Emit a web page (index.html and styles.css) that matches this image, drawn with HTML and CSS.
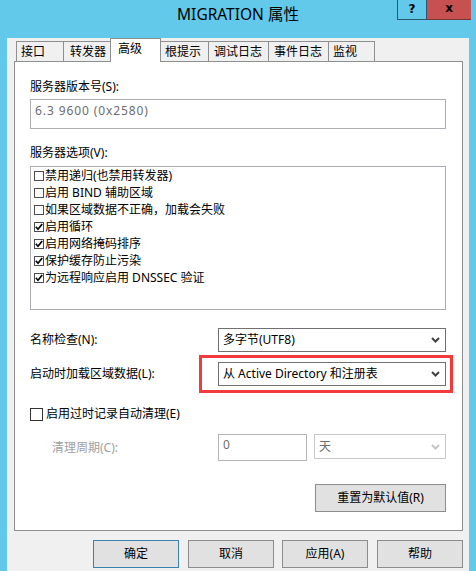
FILE: index.html
```
<!DOCTYPE html>
<html lang="zh-CN">
<head>
<meta charset="utf-8">
<title>MIGRATION 属性</title>
<link rel="stylesheet" href="styles.css">
</head>
<body>
<div class="window">
  <div class="titlebar">
    <div class="title">MIGRATION 属性</div>
    <div class="caption-btns">
      <div class="cap-help">?</div>
      <div class="cap-close">x</div>
    </div>
  </div>
  <div class="client">
    <div class="tabs">
      <div class="tab t1">接口</div>
      <div class="tab t2">转发器</div>
      <div class="tab active">高级</div>
      <div class="tab t4">根提示</div>
      <div class="tab t5">调试日志</div>
      <div class="tab t6">事件日志</div>
      <div class="tab t7">监视</div>
    </div>
    <div class="panel">
      <div class="label">服务器版本号(S):</div>
      <div class="textbox version">6.3 9600 (0x2580)</div>
      <div class="label label-options">服务器选项(V):</div>
      <div class="listbox">
        <div class="item"><span class="lcb"></span>禁用递归(也禁用转发器)</div>
        <div class="item"><span class="lcb"></span>启用 BIND 辅助区域</div>
        <div class="item"><span class="lcb"></span>如果区域数据不正确，加载会失败</div>
        <div class="item"><span class="lcb"><svg width="8" height="8" viewBox="0 0 8 8"><polyline points="0.8,3.8 3,6.2 7.2,1" fill="none" stroke="#000" stroke-width="1.7"/></svg></span>启用循环</div>
        <div class="item"><span class="lcb"><svg width="8" height="8" viewBox="0 0 8 8"><polyline points="0.8,3.8 3,6.2 7.2,1" fill="none" stroke="#000" stroke-width="1.7"/></svg></span>启用网络掩码排序</div>
        <div class="item"><span class="lcb"><svg width="8" height="8" viewBox="0 0 8 8"><polyline points="0.8,3.8 3,6.2 7.2,1" fill="none" stroke="#000" stroke-width="1.7"/></svg></span>保护缓存防止污染</div>
        <div class="item"><span class="lcb"><svg width="8" height="8" viewBox="0 0 8 8"><polyline points="0.8,3.8 3,6.2 7.2,1" fill="none" stroke="#000" stroke-width="1.7"/></svg></span>为远程响应启用 DNSSEC 验证</div>
      </div>
      <div class="row row-name">
        <span class="row-label">名称检查(N):</span>
        <div class="combo">
          <span class="combo-text">多字节(UTF8)</span>
          <svg class="chev" width="9" height="6" viewBox="0 0 9 6"><polyline points="1,1 4.5,4.5 8,1" fill="none" stroke="#404040" stroke-width="2"/></svg>
        </div>
      </div>
      <div class="row row-load">
        <span class="row-label">启动时加载区域数据(L):</span>
        <div class="combo highlighted">
          <span class="combo-text">从 Active Directory 和注册表</span>
          <svg class="chev" width="9" height="6" viewBox="0 0 9 6"><polyline points="1,1 4.5,4.5 8,1" fill="none" stroke="#404040" stroke-width="2"/></svg>
          <div class="redbox"></div>
        </div>
      </div>
      <div class="check-row"><span class="cbox"></span>启用过时记录自动清理(E)</div>
      <div class="row row-clean">
        <span class="row-label disabled-label">清理周期(C):</span>
        <div class="textbox period">0</div>
        <div class="combo unit">
          <span class="combo-text grey">天</span>
          <svg class="chev" width="9" height="6" viewBox="0 0 9 6"><polyline points="1,1 4.5,4.5 8,1" fill="none" stroke="#c4c4c4" stroke-width="2"/></svg>
        </div>
      </div>
      <div class="reset-row"><div class="btn reset">重置为默认值(R)</div></div>
    </div>
    <div class="buttons">
      <div class="btn dlg default">确定</div>
      <div class="btn dlg">取消</div>
      <div class="btn dlg">应用(A)</div>
      <div class="btn dlg">帮助</div>
    </div>
  </div>
</div>
</body>
</html>
```
FILE: styles.css
```
* { box-sizing: border-box; }
html, body { margin: 0; padding: 0; }
body {
  width: 476px;
  height: 571px;
  overflow: hidden;
  background: #62c9ea;
  font-family: "Noto Sans", "Noto Sans CJK SC", sans-serif;
  font-size: 12px;
  color: #000;
}
.window {
  width: 476px;
  height: 571px;
  padding: 0 7px;
  background: #62c9ea;
}
.titlebar {
  position: relative;
  height: 29px;
  display: flex;
  align-items: center;
  justify-content: center;
}
.title {
  font-family: "Noto Sans", "Noto Sans CJK SC", sans-serif;
  font-size: 15.5px;
  color: #000;
  line-height: 20px;
  margin-top: -2px;
}
.caption-btns {
  position: absolute;
  top: 0;
  right: -2px;
  display: flex;
  height: 20px;
}
.cap-help {
  width: 29px;
  height: 20px;
  border: 1px solid #2a5a72;
  border-top: none;
  border-right: none;
  background: #62c9ea;
  font-family: "DejaVu Sans", sans-serif;
  font-weight: bold;
  font-size: 12px;
  line-height: 18px;
  text-align: center;
}
.cap-close {
  width: 45px;
  height: 20px;
  background: #c75050;
  border-left: 1px solid #2a5a72;
  border-bottom: 1px solid #7a3636;
  font-family: "DejaVu Sans", sans-serif;
  font-weight: bold;
  font-size: 12px;
  line-height: 17px;
  text-align: center;
}
.client {
  width: 462px;
  height: 542px;
  background: #f0f0f0;
  padding: 0 6px 0 7px;
}
.tabs {
  display: flex;
  align-items: flex-end;
  height: 23px;
  margin-top: 9px;
  margin-left: 2px;
  position: relative;
  z-index: 2;
}
.tab {
  height: 20px;
  line-height: 19px;
  padding-left: 4px;
  border: 1px solid #8e8f8f;
  border-bottom: none;
  border-right: none;
  background: #f0f0f0;
  white-space: nowrap;
}
.tab.t1 { width: 47px; }
.tab.t2 { width: 47px; padding-left: 6px; }
.tab.t4 { width: 47px; padding-left: 4px; border-left: none; }
.tab.t5 { width: 60px; padding-left: 5px; }
.tab.t6 { width: 60px; padding-left: 5px; }
.tab.t7 { width: 47px; padding-left: 4px; border-right: 1px solid #8e8f8f; }
.tab.active {
  width: 51px;
  height: 24px;
  margin-bottom: -1px;
  background: #fff;
  padding-left: 7px;
  line-height: 19px;
  border-right: 1px solid #8e8f8f;
}
.panel {
  width: 449px;
  height: 470px;
  background: #fff;
  border: 1px solid #8e8f8f;
  padding: 17px 16px 0 15px;
  position: relative;
  z-index: 1;
}
.label { line-height: 16px; height: 16px; }
.textbox {
  border: 1px solid #abadb3;
  background: #fff;
  line-height: 16px;
}
.textbox.version {
  margin-top: 4px;
  height: 30px;
  padding: 3px 4px;
  color: #6d6d6d;
  letter-spacing: 0.9px;
}
.label-options { margin-top: 16px; }
.listbox {
  margin-top: 5px;
  height: 144px;
  border: 1px solid #abadb3;
}
.item {
  height: 17px;
  line-height: 17px;
  display: flex;
  align-items: center;
  white-space: nowrap;
}
.lcb {
  width: 10px;
  height: 10px;
  border: 1px solid #4d4d4d;
  margin-left: 3px;
  margin-right: 1px;
  display: flex;
  align-items: center;
  justify-content: center;
  flex: none;
}
.lcb svg { display: block; }
.row {
  display: flex;
  align-items: center;
}
.row-label {
  width: 188px;
  flex: none;
  line-height: 16px;
}
.row-name { margin-top: 18px; }
.row-load { margin-top: 10px; }
.combo {
  position: relative;
  width: 228px;
  height: 24px;
  border: 1px solid #707070;
  background: #fff;
  display: flex;
  align-items: center;
  padding: 0 4px;
}
.combo-text { flex: 1; line-height: 16px; white-space: nowrap; }
.combo-text.grey { color: #6d6d6d; }
.chev { flex: none; margin-right: 1px; }
.redbox {
  position: absolute;
  top: -8px;
  left: -20px;
  right: -8px;
  bottom: -8px;
  border: 3px solid #f23a3d;
  pointer-events: none;
}
.check-row {
  margin-top: 20px;
  height: 16px;
  display: flex;
  align-items: center;
  line-height: 16px;
}
.cbox {
  width: 13px;
  height: 13px;
  border: 1px solid #333;
  background: #fff;
  margin-right: 3px;
  flex: none;
}
.row-clean {
  margin-top: 12px;
  align-items: flex-start;
}
.row-clean .row-label { padding-left: 22px; line-height: 27px; }
.disabled-label { color: #a0a0a0; }
.textbox.period {
  width: 89px;
  height: 27px;
  padding: 2px 4px;
  color: #6d6d6d;
  border-color: #b5b5b5;
}
.combo.unit {
  width: 132px;
  height: 25px;
  margin-left: 7px;
  border-color: #c9c9c9;
}
.reset-row {
  margin-top: 23px;
  display: flex;
  justify-content: flex-end;
}
.btn {
  height: 28px;
  background: #e1e1e1;
  border: 1px solid #8c8c8c;
  display: flex;
  align-items: center;
  justify-content: center;
  line-height: 16px;
}
.btn.reset { width: 131px; }
.buttons {
  margin-top: 9px;
  display: flex;
  justify-content: flex-end;
  gap: 9px;
  padding-right: 0;
}
.btn.dlg { width: 86px; }
.btn.dlg:nth-child(3) { margin-left: -1px; }
.btn.default { border-color: #3c7fb1; }
```
